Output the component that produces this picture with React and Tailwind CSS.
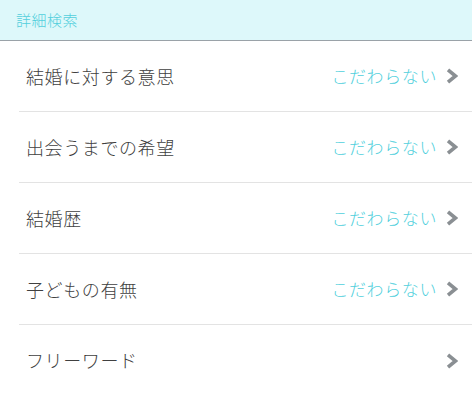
export default function App() {
  const rows = [
    { label: '結婚に対する意思', value: 'こだわらない' },
    { label: '出会うまでの希望', value: 'こだわらない' },
    { label: '結婚歴', value: 'こだわらない' },
    { label: '子どもの有無', value: 'こだわらない' },
    { label: 'フリーワード', value: '' },
  ];

  return (
    <div className="w-[472px] h-[393px] bg-white overflow-hidden font-light" style={{ fontFamily: '"Noto Sans CJK JP", "Noto Sans", sans-serif' }}>
      <div className="h-[41px] bg-[#ddf8fa] border-b border-[#9aa2a8] flex items-center px-[16px]">
        <span className="text-[15px] text-[#52cfdc] tracking-[0.5px]">詳細検索</span>
      </div>
      <div className="pl-[19px]">
        {rows.map((r, i) => (
          <div key={i} className={`h-[71px] flex items-center pr-[14px] ${i < rows.length - 1 ? 'border-b border-[#e3e3e3]' : ''}`}>
            <span className="pl-[7px] text-[18px] text-[#404040] tracking-[0.6px]">{r.label}</span>
            <span className="ml-auto text-[17px] text-[#4fcfdc] tracking-[0.6px]">{r.value}</span>
            <svg className="ml-[9px]" width="12" height="16" viewBox="0 0 12 16">
              <path d="M2 1.8 L9.5 8 L2 14.2" fill="none" stroke="#8a8f93" strokeWidth="3.6" />
            </svg>
          </div>
        ))}
      </div>
    </div>
  );
}
